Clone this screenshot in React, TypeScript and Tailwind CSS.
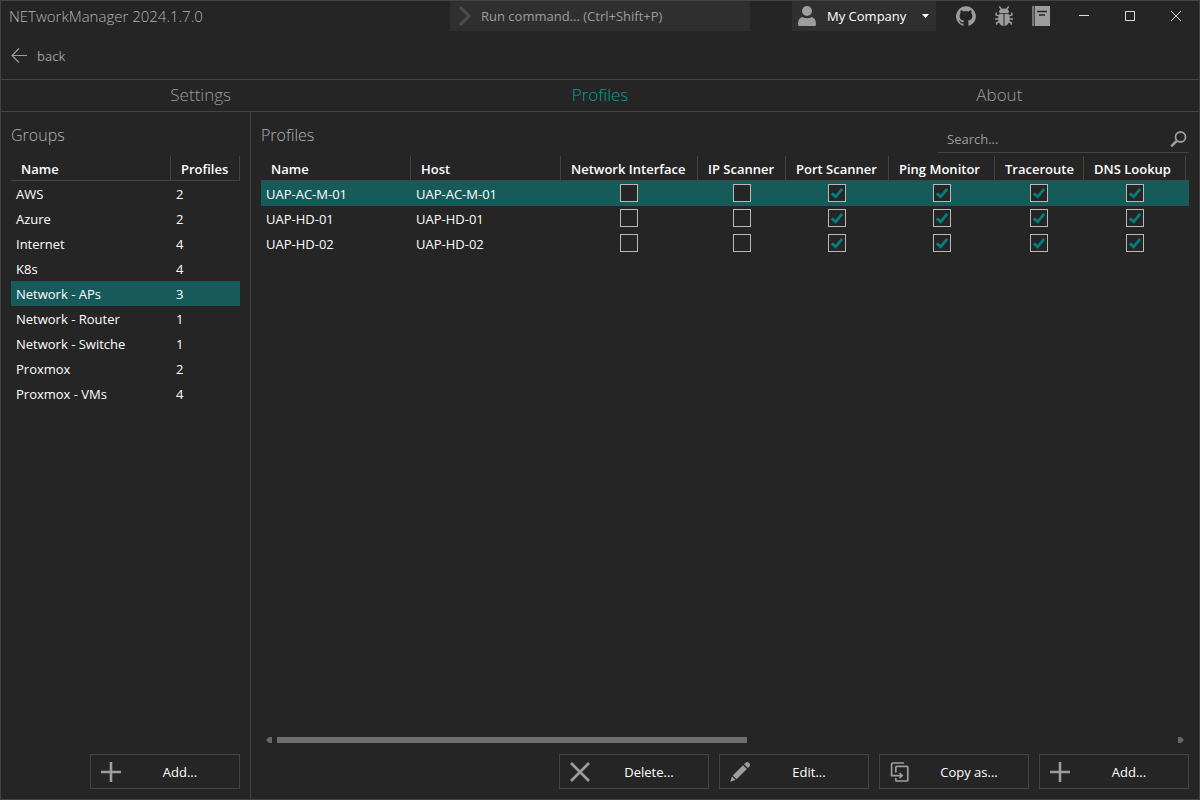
import type { ReactNode } from 'react';

type Profile = { name: string; host: string; enabled: boolean[] };

const groups: [string, number][] = [
  ['AWS', 2],
  ['Azure', 2],
  ['Internet', 4],
  ['K8s', 4],
  ['Network - APs', 3],
  ['Network - Router', 1],
  ['Network - Switche', 1],
  ['Proxmox', 2],
  ['Proxmox - VMs', 4],
];

const tools = ['Network Interface', 'IP Scanner', 'Port Scanner', 'Ping Monitor', 'Traceroute', 'DNS Lookup'];

const toolWidths = ['w-[137px]', 'w-[88px]', 'w-[103px]', 'w-[106px]', 'w-[89px]', 'w-[102px]'];

const profiles: Profile[] = ['UAP-AC-M-01', 'UAP-HD-01', 'UAP-HD-02'].map((name) => ({
  name,
  host: name,
  enabled: [false, false, true, true, true, true],
}));

function Tick({ checked, label }: { checked: boolean; label: string }) {
  return (
    <span className="mx-auto grid size-[18px]">
      <input
        type="checkbox"
        aria-label={label}
        defaultChecked={checked}
        className="peer col-start-1 row-start-1 size-[18px] appearance-none border border-[#b9b9b9] bg-[#252525]"
      />
      <svg
        viewBox="0 0 18 18"
        className="pointer-events-none invisible col-start-1 row-start-1 size-[18px] peer-checked:visible"
        aria-hidden="true"
      >
        <path d="M3.8 9.4 7.6 12.800 14.2 4.900" fill="none" stroke="#008080" strokeWidth="2.8" />
      </svg>
    </span>
  );
}

function ActionButton({ icon, children }: { icon: ReactNode; children: ReactNode }) {
  return (
    <button
      type="button"
      className="flex h-[35px] w-[150px] items-center border border-[#434343] pl-[10px] text-[13px] text-white"
    >
      <span className="size-5 text-[#9d9d9d]">{icon}</span>
      <span className="flex-1 text-center">{children}</span>
    </button>
  );
}

const PlusIcon = () => (
  <svg viewBox="0 0 20 20" className="size-5" aria-hidden="true">
    <path d="M10 0V20M0 10H20" stroke="currentColor" strokeWidth="2.6" />
  </svg>
);

const CrossIcon = () => (
  <svg viewBox="0 0 20 20" className="size-5" aria-hidden="true">
    <path d="M1 1 19 19M19 1 1 19" stroke="currentColor" strokeWidth="2.6" />
  </svg>
);

const PencilIcon = () => (
  <svg viewBox="0 0 20 20" className="size-5" fill="currentColor" aria-hidden="true">
    <path d="M14 2.200 15.300.9a2.800 2.800 0 0 1 4 3.900L17.900 6.100z" />
    <path d="M13 3.200 16.900 7.100 6.600 17.200 2.700 13.400z" />
    <path d="M1.900 14.400 5.600 18 .3 19.700z" />
  </svg>
);

const CopyIcon = () => (
  <svg viewBox="0 0 20 20" className="size-5" fill="none" stroke="currentColor" aria-hidden="true">
    <path d="M14 1H3A1.400 1.400 0 0 0 1.600 2.400V13.600H12" strokeWidth="1.700" />
    <path d="M5.800 10.500V5.400A1 1 0 0 1 6.800 4.400H16.800A1 1 0 0 1 17.800 5.400V18A1 1 0 0 1 16.800 19H6.800A1 1 0 0 1 5.800 18V16" strokeWidth="1.700" />
    <path d="M9.500 11 12.200 13.600 9.500 16.200" strokeWidth="1.700" />
  </svg>
);

const UserIcon = () => (
  <svg viewBox="0 0 18 20" className="h-5 w-[18px]" fill="#9d9d9d" aria-hidden="true">
    <circle cx="9" cy="5" r="5" />
    <path d="M0 18.500C0 13.500 2 11.200 4.600 11.200 6 12 7.500 12.300 9 12.300S12 12 13.400 11.200C16 11.200 18 13.500 18 18.500Q18 20 16.500 20H1.500Q0 20 0 18.500z" />
  </svg>
);

const GithubIcon = () => (
  <svg viewBox="0 0 24 24" className="size-5" fill="#9d9d9d" aria-hidden="true">
    <path d="M12 .3a12 12 0 0 0-3.800 23.380c.6.120.830-.26.830-.57L9 21.070c-3.340.72-4.040-1.610-4.040-1.610-.55-1.390-1.340-1.760-1.340-1.760-1.080-.74.090-.73.090-.73 1.200.090 1.830 1.240 1.830 1.240 1.080 1.830 2.810 1.300 3.500 1 .1-.78.420-1.310.760-1.610-2.670-.3-5.470-1.330-5.470-5.930 0-1.310.470-2.380 1.240-3.220-.14-.3-.54-1.520.1-3.180 0 0 1-.32 3.300 1.230a11.500 11.500 0 0 1 6 0c2.280-1.550 3.290-1.230 3.290-1.230.640 1.660.240 2.880.120 3.180a4.650 4.650 0 0 1 1.230 3.220c0 4.610-2.800 5.630-5.480 5.920.420.360.810 1.100.810 2.220l-.010 3.290c0 .310.200.690.820.570A12 12 0 0 0 12 .3" />
  </svg>
);

const BugIcon = () => (
  <svg viewBox="0 0 18 20" className="h-5 w-[18px]" aria-hidden="true">
    <path d="M3.800 6.300Q4.500 2.600 9 2.600T14.200 6.300L12.800 7H5.200z" fill="#9d9d9d" />
    <path d="M4.600 7.800H8.500V20C5.200 19.500 3.300 16.500 3.300 12.500 3.300 10.600 3.800 9 4.600 7.800zM13.400 7.800H9.500V20C12.800 19.500 14.700 16.500 14.700 12.500 14.700 10.600 14.200 9 13.400 7.800z" fill="#9d9d9d" />
    <path d="M6.500 3.500 4.300.5M11.500 3.500 13.700.5M4.500 10 1.200 9V6.500M13.500 10 16.800 9V6.500M4 13H0M14 13H18M4.500 15.500 1.700 16.700V18.800M13.500 15.500 16.300 16.700V18.800" fill="none" stroke="#9d9d9d" strokeWidth="1.500" />
  </svg>
);

const BookIcon = () => (
  <svg viewBox="0 0 18 20" className="h-5 w-[18px]" aria-hidden="true">
    <path d="M0 0H2V20H0z" fill="#757575" />
    <path d="M2 0H3V20H2z" fill="#4a4a4a" />
    <path d="M3 0H18V20H3z" fill="#9d9d9d" />
    <path d="M5 5.500H15M7 9H13" stroke="#252525" strokeWidth="1.500" />
  </svg>
);

const rule = 'border-[#434343]';
const headCell =
  'h-[25px] border-r border-b border-[#434343] px-[10px] pt-[2px] text-left font-semibold whitespace-nowrap';

export default function App() {
  return (
    <div className={`flex min-h-screen flex-col border ${rule} bg-[#252525] font-['Open_Sans','Noto_Sans',sans-serif] text-[13px] leading-5 text-white`}>
      <header className="grid h-[30px] grid-cols-[1fr_300px_1fr] items-center">
        <h1 className="pl-2 text-[15px] font-light text-[#b4b4b4]">NETworkManager 2024.1.7.0</h1>
        <label className="flex h-[30px] items-center gap-[9px] bg-[#2f2f2f] pl-2">
          <svg viewBox="0 0 14 20" className="h-5 w-[14px]" aria-hidden="true">
            <path d="M2 1 11 10 2 19" fill="none" stroke="#4b4b4b" strokeWidth="3" />
          </svg>
          <input
            aria-label="Run command"
            placeholder="Run command... (Ctrl+Shift+P)"
            className="min-w-0 flex-1 bg-transparent outline-none placeholder:text-[#9d9d9d] placeholder:opacity-100"
          />
        </label>
        <div className="flex h-[30px] items-center justify-end">
          <button type="button" className="flex h-[30px] w-36 items-center bg-[#2f2f2f] pr-[7px] pl-[6px] font-medium">
            <UserIcon />
            <span className="flex-1 pl-[11px] text-left">My Company</span>
            <svg viewBox="0 0 7 4" className="h-1 w-[7px]" aria-hidden="true">
              <path d="M0 0H7L3.500 4z" fill="#fff" />
            </svg>
          </button>
          <div className="flex items-center gap-[19px] pr-[11px] pl-5">
            <button type="button" aria-label="GitHub"><GithubIcon /></button>
            <button type="button" aria-label="Report a bug"><BugIcon /></button>
            <button type="button" aria-label="Documentation"><BookIcon /></button>
          </div>
          <button type="button" aria-label="Minimize" className="grid h-[30px] w-[46px] place-items-center">
            <svg viewBox="0 0 10 10" className="size-[10px]" aria-hidden="true"><path d="M0 4.500H10" stroke="#ddd" /></svg>
          </button>
          <button type="button" aria-label="Maximize" className="grid h-[30px] w-[46px] place-items-center">
            <svg viewBox="0 0 10 10" className="size-[10px]" aria-hidden="true"><path d="M.5.5H9.500V9.500H.5z" fill="none" stroke="#ddd" /></svg>
          </button>
          <button type="button" aria-label="Close" className="grid h-[30px] w-[46px] place-items-center">
            <svg viewBox="0 0 10 10" className="size-[10px]" aria-hidden="true"><path d="M0 0 10 10M10 0 0 10" stroke="#ddd" /></svg>
          </button>
        </div>
      </header>

      <div className="flex h-12 items-center px-[10px] pt-px">
        <button type="button" className="flex items-center gap-[10px] text-[#9d9d9d]">
          <svg viewBox="0 0 16 16" className="size-4" aria-hidden="true">
            <path d="M.8 7.500H16M8 .5 1 7.500 8 14.500" fill="none" stroke="#9d9d9d" strokeWidth="1.200" />
          </svg>
          back
        </button>
      </div>

      <nav className={`grid h-[33px] grid-cols-3 items-center border-y ${rule} pb-[2px] text-center text-[17px] font-light text-[#9d9d9d]`}>
        <a href="#settings">Settings</a>
        <a href="#profiles" className="text-[#0a9c9c]">Profiles</a>
        <a href="#about">About</a>
      </nav>

      <div className="flex flex-1">
        <section className={`flex w-[250px] flex-col border-r ${rule} p-[10px]`}>
          <h2 className="flex h-[34px] items-center pb-2 text-[16px] font-light text-[#b4b4b4]">Groups</h2>
          <table className="w-full table-fixed border-separate border-spacing-0">
            <thead>
              <tr>
                <th className={headCell}>Name</th>
                <th className={`${headCell} w-[69px]`}>Profiles</th>
              </tr>
            </thead>
            <tbody>
              {groups.map(([name, count]) => (
                <tr key={name} className={name === 'Network - APs' ? 'bg-[#165a5a]' : ''}>
                  <td className="h-[25px] px-[5px]">{name}</td>
                  <td className="h-[25px] px-[5px]">{count}</td>
                </tr>
              ))}
            </tbody>
          </table>
          <div className="mt-auto flex justify-end">
            <ActionButton icon={<PlusIcon />}>Add...</ActionButton>
          </div>
        </section>

        <section className="flex min-w-0 flex-1 flex-col p-[10px]">
          <div className="flex h-[34px] justify-between">
            <h2 className="flex items-center pb-2 text-[16px] font-light text-[#b4b4b4]">Profiles</h2>
            <label className={`flex h-[31px] w-[251px] items-center border-b ${rule} pt-1 pr-[2px] pl-[9px]`}>
              <input
                aria-label="Search profiles"
                placeholder="Search..."
                className="min-w-0 flex-1 bg-transparent outline-none placeholder:text-[#9d9d9d] placeholder:opacity-100"
              />
              <svg viewBox="0 0 17 17" className="size-[17px]" aria-hidden="true">
                <circle cx="10.500" cy="6" r="5" fill="none" stroke="#9d9d9d" strokeWidth="1.800" />
                <path d="M6.800 9.800 1.200 15.400" stroke="#9d9d9d" strokeWidth="2.600" />
              </svg>
            </label>
          </div>
          <table className="w-full table-fixed border-separate border-spacing-0">
            <thead>
              <tr>
                <th className={`${headCell} w-[150px]`}>Name</th>
                <th className={`${headCell} w-[150px]`}>Host</th>
                {tools.map((tool, i) => (
                  <th key={tool} className={`${headCell} ${toolWidths[i]}`}>{tool}</th>
                ))}
                <td className={`border-b ${rule}`} />
              </tr>
            </thead>
            <tbody>
              {profiles.map((profile, row) => (
                <tr key={profile.name} className={row === 0 ? 'bg-[#165a5a]' : ''}>
                  <td className="h-[25px] px-[5px]">{profile.name}</td>
                  <td className="h-[25px] px-[5px]">{profile.host}</td>
                  {profile.enabled.map((on, i) => (
                    <td key={tools[i]} className="h-[25px] pr-px pb-[2px]">
                      <Tick checked={on} label={`${tools[i]} for ${profile.name}`} />
                    </td>
                  ))}
                  <td />
                </tr>
              ))}
            </tbody>
          </table>
          <div className="mt-auto flex h-[6px] items-center gap-[5px] px-[5px]" aria-hidden="true">
            <svg viewBox="0 0 6 6" className="size-[6px]"><path d="M6 0V6H3L0 3 3 0z" fill="#686868" /></svg>
            <div className="flex-1"><div className="h-[6px] w-[52.500%] bg-[#6e6e6e]" /></div>
            <svg viewBox="0 0 6 6" className="size-[6px]"><path d="M0 0V6H3L6 3 3 0z" fill="#686868" /></svg>
          </div>
          <div className="mt-[11px] flex justify-end gap-[10px]">
            <ActionButton icon={<CrossIcon />}>Delete...</ActionButton>
            <ActionButton icon={<PencilIcon />}>Edit...</ActionButton>
            <ActionButton icon={<CopyIcon />}>Copy as...</ActionButton>
            <ActionButton icon={<PlusIcon />}>Add...</ActionButton>
          </div>
        </section>
      </div>
    </div>
  );
}
